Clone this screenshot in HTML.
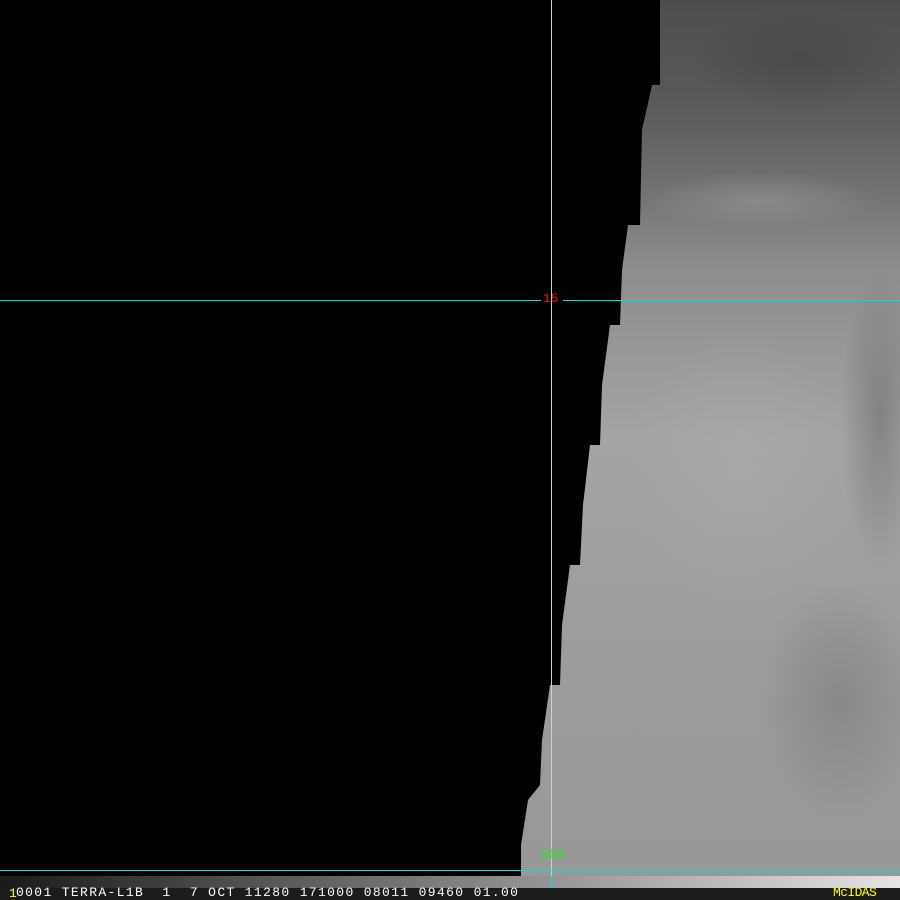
<!DOCTYPE html>
<html><head><style>
html,body{margin:0;padding:0;background:#000;width:900px;height:900px;overflow:hidden;position:relative;font-family:"Liberation Mono",monospace}
.t{position:absolute;font-size:12px;line-height:12px;white-space:pre}
</style></head><body>
<svg width="900" height="900" style="position:absolute;left:0;top:0">
<defs>
<linearGradient id="g" x1="0" y1="0" x2="0" y2="1">
<stop offset="0" stop-color="#4e4e4e"/>
<stop offset="0.12" stop-color="#5a5a5a"/>
<stop offset="0.22" stop-color="#727272"/>
<stop offset="0.3" stop-color="#8c8c8c"/>
<stop offset="0.5" stop-color="#a4a4a4"/>
<stop offset="0.75" stop-color="#9c9c9c"/>
<stop offset="1" stop-color="#989898"/>
</linearGradient>
<linearGradient id="h" x1="0" y1="0" x2="1" y2="0">
<stop offset="0" stop-color="#1a1a1a"/>
<stop offset="1" stop-color="#e4e4e4"/>
</linearGradient>
<radialGradient id="r1"><stop offset="0" stop-color="#b0b0b0"/><stop offset="1" stop-color="#b0b0b0" stop-opacity="0"/></radialGradient>
<radialGradient id="r2"><stop offset="0" stop-color="#3a3a3a"/><stop offset="1" stop-color="#3a3a3a" stop-opacity="0"/></radialGradient>
</defs>
<polygon fill="url(#g)" points="665,0 900,0 900,876 521,876 521,845 528,800 540,785 542,740 550,685 560,685 562,625 570,565 580,565 583,505 590,445 600,445 602,385 610,325 620,325 622,270 628,225 640,225 642,130 652,85 660,85 660,0"/>
<ellipse cx="760" cy="200" rx="120" ry="30" fill="url(#r1)" opacity="0.35"/>
<ellipse cx="740" cy="470" rx="110" ry="140" fill="url(#r1)" opacity="0.4"/>
<ellipse cx="880" cy="420" rx="40" ry="150" fill="url(#r2)" opacity="0.3"/>
<ellipse cx="800" cy="60" rx="110" ry="50" fill="url(#r2)" opacity="0.4"/>
<ellipse cx="840" cy="700" rx="80" ry="120" fill="url(#r2)" opacity="0.2"/>
<rect x="0" y="876" width="900" height="12" fill="url(#h)"/>
<rect x="0" y="888" width="900" height="12" fill="#1c1c1c"/>
<line x1="551.5" y1="0" x2="551.5" y2="876" stroke="#d0d0d0" stroke-width="1"/>
<line x1="551.5" y1="876" x2="551.5" y2="888" stroke="#00e0e0" stroke-width="1"/>
<line x1="0" y1="300.5" x2="541" y2="300.5" stroke="#00e0e0"/>
<line x1="563" y1="300.5" x2="900" y2="300.5" stroke="#00e0e0"/>
<line x1="0" y1="870.5" x2="900" y2="870.5" stroke="#00e0e0"/>
</svg>
<div class="t" style="left:543px;top:293px;color:#f00;font-size:13px">15</div>
<div class="t" style="left:540px;top:849px;color:#0f0;font-size:13px">110</div>
<div class="t" style="left:9px;top:888px;color:#ff0;font-size:13px">1</div>
<div class="t" style="left:16px;top:887px;color:#fff;font-size:13px;letter-spacing:1.35px">0001 TERRA-L1B  1  7 OCT 11280 171000 08011 09460 01.00</div>
<div class="t" style="left:833px;top:887px;color:#ff0;font-size:13px;letter-spacing:-0.6px">McIDAS</div>
</body></html>
